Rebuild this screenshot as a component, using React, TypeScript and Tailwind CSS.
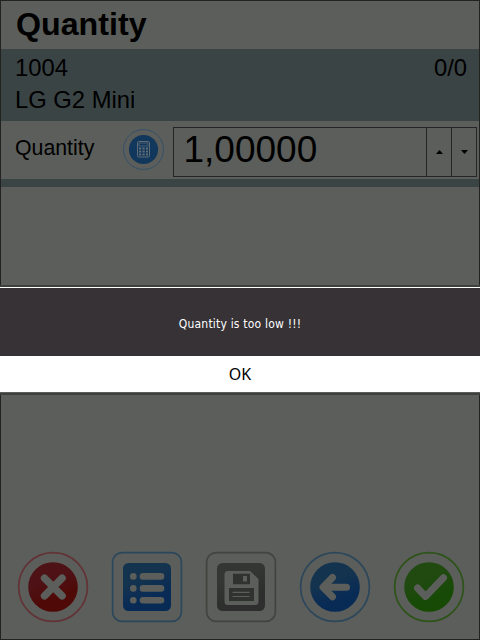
import type { ReactNode } from "react";

function RoundIcon({ ring, from, to, id, children }: { ring: string; from: string; to: string; id: string; children: ReactNode }) {
  return (
    <svg width="72" height="72" viewBox="0 0 72 72" fill="none" className="block">
      <defs>
        <linearGradient id={id} x1="0.3" y1="0" x2="0.7" y2="1">
          <stop offset="0.35" stopColor={from} />
          <stop offset="0.75" stopColor={to} />
        </linearGradient>
      </defs>
      <circle cx="36" cy="36" r="34.4" stroke={ring} strokeWidth="1.7" />
      <circle cx="36" cy="36" r="24.8" fill={`url(#${id})`} />
      {children}
    </svg>
  );
}

function SquareIcon({ ring, from, to, id, children }: { ring: string; from: string; to: string; id: string; children: ReactNode }) {
  return (
    <svg width="72" height="72" viewBox="0 0 72 72" fill="none" className="block">
      <defs>
        <linearGradient id={id} x1="0.3" y1="0" x2="0.7" y2="1">
          <stop offset="0.3" stopColor={from} />
          <stop offset="0.75" stopColor={to} />
        </linearGradient>
      </defs>
      <rect x="1.6" y="1.6" width="68.8" height="68.8" rx="9.5" stroke={ring} strokeWidth="1.7" />
      <rect x="12" y="12" width="48" height="48" rx="5.5" fill={`url(#${id})`} />
      {children}
    </svg>
  );
}

const bg = "#5b5e5a";

function CalculatorIcon() {
  return (
    <svg width="42" height="42" viewBox="-0.5 -0.5 42 42" fill="none" className="block">
      <circle cx="21" cy="21" r="20" stroke="#34506a" strokeWidth="1" />
      <circle cx="21" cy="21" r="14.6" fill="#12375c" />
      <rect x="15" y="13" width="12" height="15.5" rx="1.2" stroke="#5f6d76" />
      <rect x="16.5" y="14.5" width="9" height="3" stroke="#5f6d76" strokeWidth="0.7" />
      <path d="M16.5 20h2.2M20 20h2.2M23.5 20h2M16.5 23h2.2M20 23h2.2M23.5 23h2M16.5 26h2.2M20 26h2.2M23.5 26h2" stroke="#5f6d76" strokeWidth="2" />
    </svg>
  );
}

export default function App() {
  return (
    <div className="relative h-[640px] w-[480px] overflow-hidden bg-[#5b5e5a] font-['Liberation_Sans',Arial,sans-serif] text-black">
      <div className="flex h-full flex-col border border-[#222321]">
        <header className="h-12 shrink-0 pl-[15px] text-[32.2px] leading-[46px] font-bold">Quantity</header>
        <section className="h-[72px] shrink-0 bg-[#3b4445] pr-3 pl-[14px] text-[23.8px] leading-8">
          <div className="flex justify-between pt-[3px]">
            <span>1004</span>
            <span>0/0</span>
          </div>
          <div>LG G2 Mini</div>
        </section>
        <section className="flex h-[58px] shrink-0 pl-[14px]">
          <label className="w-[107px] pt-[13px] text-[21.3px] leading-7">Quantity</label>
          <div className="pt-[7px]">
            <CalculatorIcon />
          </div>
          <div className="mt-[6px] ml-[9px] flex h-[50px] w-[304px] border border-[#242524]">
            <div className="flex-1 pl-[9.5px] text-[37px] leading-[43px]">1,00000</div>
            <button className="flex w-[25px] items-center justify-center border-l border-[#242524]">
              <svg width="7" height="4" viewBox="0 0 7 4"><path d="M0 4 3.5 0 7 4Z" fill="#000" /></svg>
            </button>
            <button className="flex w-[25px] items-center justify-center border-l border-[#242524]">
              <svg width="7" height="4" viewBox="0 0 7 4"><path d="M0 0 3.5 4 7 0Z" fill="#000" /></svg>
            </button>
          </div>
        </section>
        <div className="h-2 shrink-0 bg-[#3b4445]" />
        <div className="flex-1" />
        <footer className="flex h-[88px] shrink-0 gap-[22px] pl-[16px]">
          <RoundIcon id="cancel" ring="#633236" from="#4e1115" to="#4f0906">
            <path d="m27.5 27.2 17.6 17.6m0-17.6L27.5 44.8" stroke={bg} strokeWidth="7.4" strokeLinecap="round" />
          </RoundIcon>
          <SquareIcon id="list" ring="#2c475b" from="#14334f" to="#082b56">
            <g stroke={bg} strokeWidth="6.6" strokeLinecap="round">
              <path d="M22.3 25.4h.01M22.3 37.4h.01M22.3 49.2h.01M32 25.4h18M32 37.4h18M32 49.2h18" />
            </g>
          </SquareIcon>
          <SquareIcon id="save" ring="#41443f" from="#333632" to="#2d2e2d">
            <path d="M23 20h22l8.5 8v22.5a3.5 3.5 0 0 1-3.5 3.5H23a3.5 3.5 0 0 1-3.5-3.5v-27A3.5 3.5 0 0 1 23 20Z" fill={bg} />
            <path d="M28 22.8h17v10.5H28ZM24 37h25v13H24Z" fill="#303230" />
            <path d="M38 25h4v5.5h-4Z" fill={bg} />
            <path d="M27.5 41.3h17M27.5 45.5h17" stroke={bg} strokeWidth="1.2" />
          </SquareIcon>
          <RoundIcon id="back" ring="#2c475b" from="#14334f" to="#082b56">
            <path d="M33.5 26.5 24 36.3l9.5 9.5M25 36.3h22.5" stroke={bg} strokeWidth="7" strokeLinecap="round" strokeLinejoin="round" />
          </RoundIcon>
          <RoundIcon id="accept" ring="#2d5319" from="#204a10" to="#164a05">
            <path d="m24.5 37 8 8.5 18-18.7" stroke={bg} strokeWidth="7" strokeLinecap="round" strokeLinejoin="round" />
          </RoundIcon>
        </footer>
      </div>

      <div className="absolute top-[285px] left-0 flex w-[480px] flex-col" role="dialog">
        <div className="h-[2px] bg-[#3d403c]" />
        <div className="h-px bg-white" />
        <div className="flex h-[68px] items-center justify-center bg-[#363236] pt-[3px] font-['DejaVu_Sans_Condensed','DejaVu_Sans',sans-serif] text-[12px] tracking-[0.2px] text-white">
          Quantity is too low !!!
        </div>
        <button className="h-9 bg-white font-['Noto_Sans',sans-serif] text-base">OK</button>
        <div className="h-px bg-[#5b5e5a]" />
        <div className="h-[2px] bg-[#3d403c]" />
      </div>
    </div>
  );
}
